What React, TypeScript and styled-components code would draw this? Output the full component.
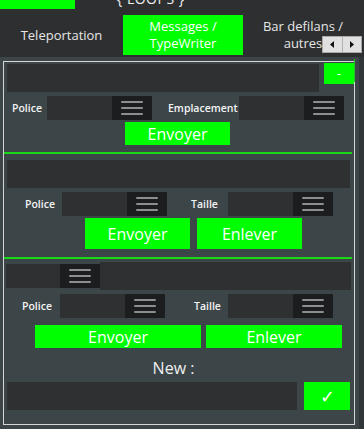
import React from "react";
import styled, { createGlobalStyle } from "styled-components";

const GREEN = "#00ff00";

const GlobalStyle = createGlobalStyle`
  html, body {
    margin: 0;
    padding: 0;
    background: #2d2f31;
  }
  body {
    font-family: "Open Sans", "Noto Sans", sans-serif;
    color: #f2f2f2;
    overflow: hidden;
  }
  * {
    box-sizing: border-box;
  }
`;

const Screen = styled.div`
  width: 364px;
  height: 429px;
  overflow: hidden;
  display: flex;
  flex-direction: column;
  background: #2d2f31;
`;

const TopStrip = styled.div`
  height: 15px;
  display: flex;
  align-items: flex-start;
  overflow: hidden;
`;

const TopBlock = styled.div`
  width: 75px;
  height: 9px;
  background: ${GREEN};
`;

const LoopsTitle = styled.div`
  margin-left: 42px;
  margin-top: -10px;
  font-size: 14px;
  line-height: 18px;
  letter-spacing: 0.5px;
  color: #f0f0f0;
`;

const TabBar = styled.div`
  height: 40px;
  display: flex;
  position: relative;
`;

const Tab = styled.div<{ $w: number; $active?: boolean }>`
  width: ${(p) => p.$w}px;
  flex-shrink: 0;
  display: flex;
  align-items: center;
  justify-content: center;
  background: ${(p) => (p.$active ? GREEN : "transparent")};
  color: ${(p) => (p.$active ? "#ffffff" : "#e6e6e6")};
`;

const TabText = styled.span`
  display: block;
  text-align: center;
  font-size: 13px;
  line-height: 17px;
  white-space: nowrap;
`;

const ArrowBox = styled.div`
  position: absolute;
  right: 2px;
  top: 21px;
  width: 40px;
  height: 17px;
  display: flex;
  border: 1px solid #a9a9a9;
  background: #e1e1e1;
`;

const ArrowBtn = styled.div`
  flex: 1;
  display: flex;
  align-items: center;
  justify-content: center;
  & + & {
    border-left: 1px solid #b3b3b3;
  }
`;

const Panel = styled.div`
  flex: 1;
  margin-top: 2px;
  display: flex;
  background: #3c4649;
`;

const PanelBody = styled.div`
  flex: 1;
`;

const ScrollTrack = styled.div`
  width: 6px;
  background: #313639;
`;

const Frame = styled.div`
  margin: 4px 4px 0 3px;
  border: 1px solid #d6d6d6;
  padding-bottom: 14px;
  display: flex;
  flex-direction: column;
`;

const Row = styled.div<{ $mt: number; $top?: boolean }>`
  display: flex;
  align-items: ${(p) => (p.$top ? "flex-start" : "center")};
  margin-top: ${(p) => p.$mt}px;
`;

const TextBox = styled.div<{ $w: number; $ml?: number; $mt?: number }>`
  width: ${(p) => p.$w}px;
  height: 28px;
  margin-left: ${(p) => p.$ml ?? 0}px;
  margin-top: ${(p) => p.$mt ?? 0}px;
  background: #2e3032;
  flex-shrink: 0;
`;

const Label = styled.div<{ $w: number; $ml: number }>`
  width: ${(p) => p.$w}px;
  margin-left: ${(p) => p.$ml}px;
  flex-shrink: 0;
  font-size: 10.5px;
  font-weight: 600;
  color: #f4f4f4;
  white-space: nowrap;
`;

const SelectBox = styled.div<{ $w: number; $ml?: number }>`
  width: ${(p) => p.$w}px;
  height: 24px;
  margin-left: ${(p) => p.$ml ?? 0}px;
  flex-shrink: 0;
  display: flex;
  justify-content: flex-end;
  background: #2e3032;
`;

const SelectToggle = styled.div`
  width: 40px;
  height: 100%;
  display: flex;
  align-items: center;
  justify-content: center;
  background: #1c1d1f;
`;

const GreenButton = styled.div<{ $w: number; $h: number; $ml: number; $size?: number }>`
  width: ${(p) => p.$w}px;
  height: ${(p) => p.$h}px;
  margin-left: ${(p) => p.$ml}px;
  flex-shrink: 0;
  display: flex;
  align-items: center;
  justify-content: center;
  background: ${GREEN};
  color: #ffffff;
  font-size: ${(p) => p.$size ?? 16}px;
`;

const MinusButton = styled(GreenButton)`
  position: relative;
  &::after {
    content: "";
    position: absolute;
    right: -1px;
    top: -4px;
    width: 1px;
    height: 23px;
    background: #22c722;
  }
`;

const Separator = styled.div<{ $mt: number }>`
  height: 2px;
  margin: ${(p) => p.$mt}px 2px 0 0;
  background: #18d818;
`;

const NewLabel = styled.div`
  margin-top: 10px;
  height: 20px;
  padding-right: 11px;
  text-align: center;
  font-size: 16px;
  line-height: 20px;
  color: #f0f0f0;
`;

const Burger = () => (
  <svg width="22" height="14" viewBox="0 0 22 14">
    <rect x="0" y="0" width="22" height="2" rx="1" fill="#8e8e8e" />
    <rect x="0" y="6" width="22" height="2" rx="1" fill="#8e8e8e" />
    <rect x="0" y="12" width="22" height="2" rx="1" fill="#8e8e8e" />
  </svg>
);

const Select = ({ w, ml }: { w: number; ml?: number }) => (
  <SelectBox $w={w} $ml={ml}>
    <SelectToggle>
      <Burger />
    </SelectToggle>
  </SelectBox>
);

const Arrow = ({ left }: { left?: boolean }) => (
  <svg width="4" height="7" viewBox="0 0 4 7">
    <polygon points={left ? "4,0 0,3.5 4,7" : "0,0 4,3.5 0,7"} fill="#111" />
  </svg>
);

function App() {
  return (
    <Screen>
      <GlobalStyle />
      <TopStrip>
        <TopBlock />
        <LoopsTitle>{"{ LOOPS }"}</LoopsTitle>
      </TopStrip>

      <TabBar>
        <Tab $w={123}>
          <TabText>Teleportation</TabText>
        </Tab>
        <Tab $w={120} $active>
          <TabText>
            Messages /
            <br />
            TypeWriter
          </TabText>
        </Tab>
        <Tab $w={120}>
          <TabText>
            Bar defilans /
            <br />
            autres
          </TabText>
        </Tab>
        <ArrowBox>
          <ArrowBtn>
            <Arrow left />
          </ArrowBtn>
          <ArrowBtn>
            <Arrow />
          </ArrowBtn>
        </ArrowBox>
      </TabBar>

      <Panel>
        <PanelBody>
          <Frame>
            {/* section 1 */}
            <Row $mt={1} $top>
              <TextBox $w={312} $ml={3} $mt={1} />
              <MinusButton $w={30} $h={21} $ml={5} $size={12}>
                -
              </MinusButton>
            </Row>
            <Row $mt={4}>
              <Label $w={35} $ml={8}>Police</Label>
              <Select w={105} />
              <Label $w={71} $ml={16}>Emplacement</Label>
              <Select w={105} />
            </Row>
            <Row $mt={2}>
              <GreenButton $w={105} $h={23} $ml={121}>Envoyer</GreenButton>
            </Row>
            <Separator $mt={7} />

            {/* section 2 */}
            <TextBox $w={343} $ml={3} $mt={6} />
            <Row $mt={4}>
              <Label $w={37} $ml={21}>Police</Label>
              <Select w={105} />
              <Label $w={37} $ml={24}>Taille</Label>
              <Select w={105} />
            </Row>
            <Row $mt={2}>
              <GreenButton $w={105} $h={31} $ml={81}>Envoyer</GreenButton>
              <GreenButton $w={105} $h={31} $ml={7}>Enlever</GreenButton>
            </Row>
            <Separator $mt={8} />

            {/* section 3 */}
            <Row $mt={3}>
              <Select w={94} ml={2} />
              <TextBox $w={251} />
            </Row>
            <Row $mt={4}>
              <Label $w={38} $ml={18}>Police</Label>
              <Select w={105} />
              <Label $w={34} $ml={29}>Taille</Label>
              <Select w={105} />
            </Row>
            <Row $mt={7}>
              <GreenButton $w={166} $h={23} $ml={31}>Envoyer</GreenButton>
              <GreenButton $w={136} $h={23} $ml={5}>Enlever</GreenButton>
            </Row>
            <NewLabel>New :</NewLabel>
            <Row $mt={4}>
              <TextBox $w={290} $ml={3} />
              <GreenButton $w={46} $h={28} $ml={7} $size={18}>
                ✓
              </GreenButton>
            </Row>
          </Frame>
        </PanelBody>
        <ScrollTrack />
      </Panel>
    </Screen>
  );
}

export default App;
